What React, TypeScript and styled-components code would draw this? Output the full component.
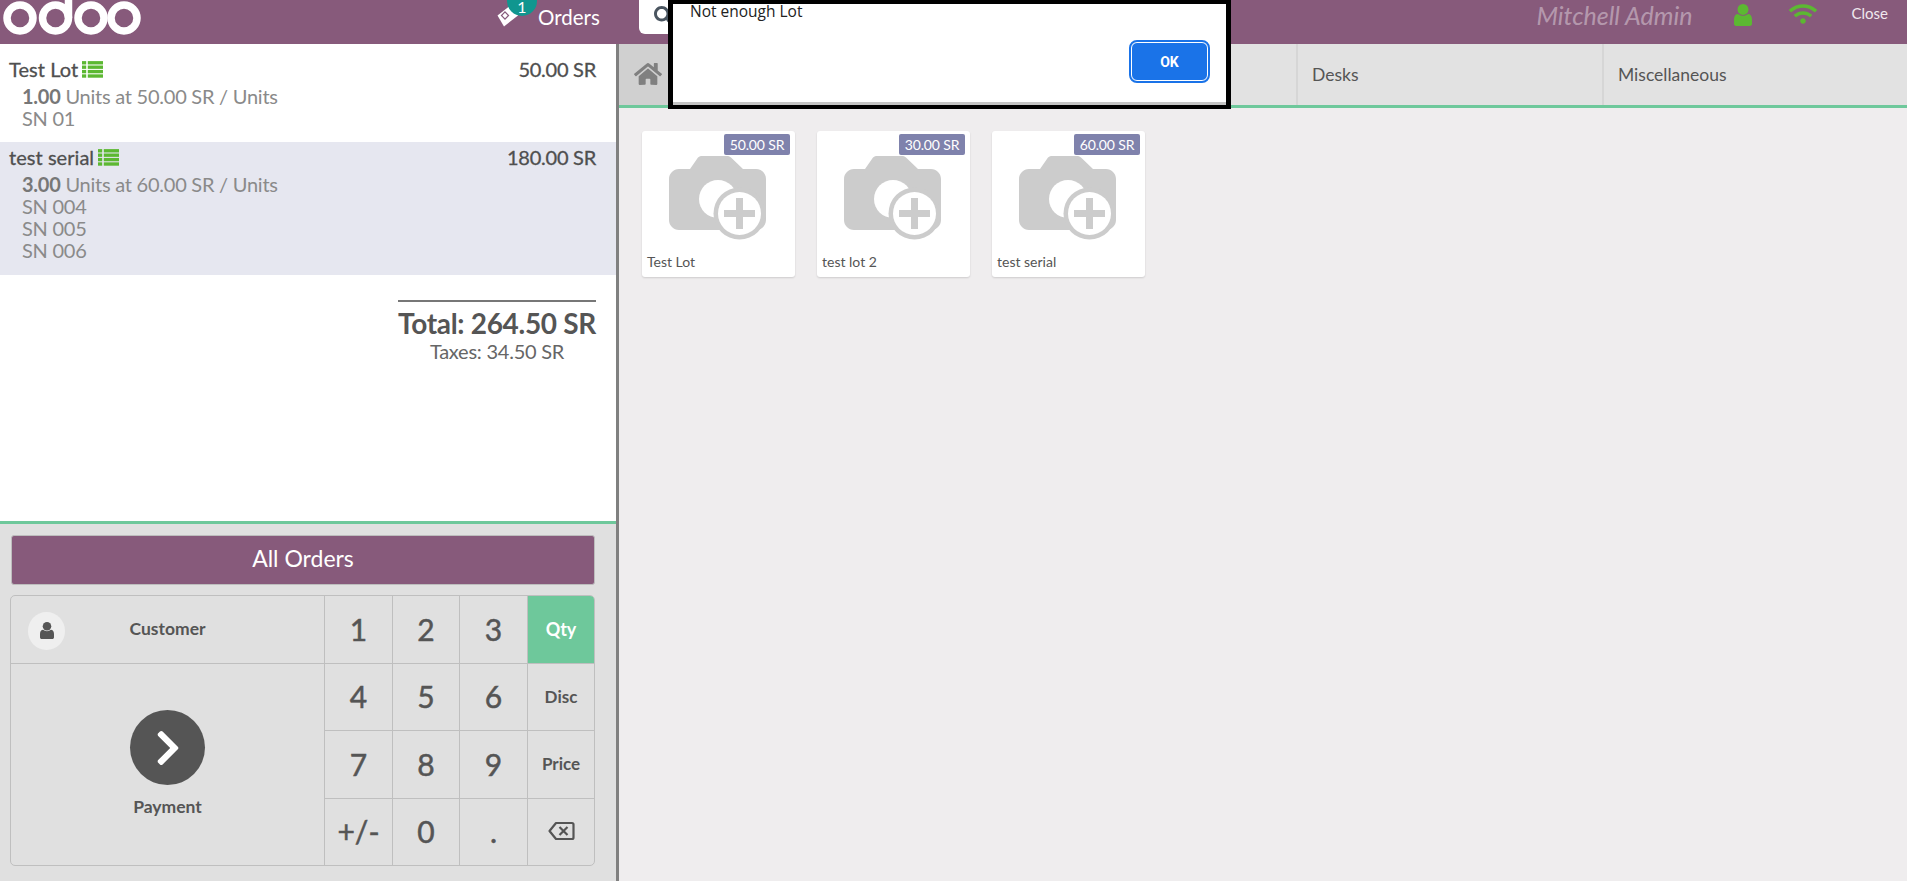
import React from 'react';
import styled, { createGlobalStyle } from 'styled-components';
import { FaHome, FaSearch, FaWifi, FaChevronRight } from 'react-icons/fa';

const GlobalStyle = createGlobalStyle`
  html, body {
    margin: 0;
    padding: 0;
    height: 100%;
    overflow: hidden;
    font-family: 'Lato', 'Noto Sans', sans-serif;
    color: #555555;
  }
  * { box-sizing: border-box; }
`;

const Page = styled.div`
  position: relative;
  width: 1907px;
  height: 881px;
  display: flex;
  flex-direction: column;
  overflow: hidden;
`;

const Header = styled.header`
  height: 44px;
  flex: none;
  background: #875a7b;
  display: flex;
  align-items: flex-start;
`;

const Logo = styled.svg`
  width: 142px;
  height: 36px;
  margin-left: 2px;
  flex: none;
`;

const OrdersTab = styled.div`
  position: relative;
  margin-left: 353px;
  width: 142px;
  height: 34px;
  display: flex;
  align-items: center;
  color: #fff;
  font-size: 20.500px;
  flex: none;
`;

const Ticket = styled.svg`
  width: 22px;
  height: 20px;
  margin-top: 3px;
  flex: none;
  overflow: visible;
`;

const OrdersLabel = styled.span`
  margin-left: 19px;
  line-height: 28px;
`;

const Badge = styled.span`
  position: absolute;
  left: 10px;
  top: 0;
  width: 30px;
  height: 16px;
  border-radius: 0 0 15px 15px;
  background: #10968f;
  color: #fff;
  font-size: 16px;
  line-height: 14px;
  text-align: center;
`;

const SearchBox = styled.div`
  width: 300px;
  height: 34px;
  background: #fff;
  border-radius: 0 0 0 6px;
  padding: 6px 0 0 15px;
  color: #4a5560;
  font-size: 19px;
  flex: none;
`;

const HeaderRight = styled.div`
  margin-left: auto;
  display: flex;
  align-items: flex-start;
`;

const Cashier = styled.span`
  color: rgba(255, 255, 255, 0.4);
  font-style: italic;
  font-size: 25px;
  line-height: 30px;
`;

const UserIcon = styled.svg<{ $size: number }>`
  width: ${props => props.$size}px;
  height: ${props => props.$size * 1.22}px;
  flex: none;
`;

const HeaderUser = styled.div`
  margin: 4px 0 0 41px;
  line-height: 0;
  color: #5cb832;
`;

const WifiBox = styled.div`
  margin: 0 0 0 37px;
  color: #5cb832;
  font-size: 28px;
  line-height: 0;
`;

const CloseLabel = styled.span`
  margin: 4px 19px 0 35px;
  color: #f0e8ee;
  font-size: 15px;
  line-height: 18px;
`;

const Body = styled.div`
  flex: 1;
  display: flex;
  min-height: 0;
`;

const LeftPane = styled.div`
  width: 619px;
  flex: none;
  border-right: 3px solid #808080;
  display: flex;
  flex-direction: column;
`;

const OrderArea = styled.div`
  flex: 1;
  background: #fff;
  border-bottom: 3px solid #6ec89b;
`;

const Line = styled.div<{ $selected?: boolean }>`
  background: ${props => (props.$selected ? '#e6e7f0' : '#fff')};
  padding: ${props => (props.$selected ? '4px' : '14px')} 20px 0 9px;
  height: ${props => (props.$selected ? '133px' : '98px')};
`;

const LineTop = styled.div`
  display: flex;
  justify-content: space-between;
  align-items: center;
  height: 22px;
  font-size: 20px;
  letter-spacing: -0.250px;
  -webkit-text-stroke: 0.300px #4f4f4f;
  color: #4f4f4f;
`;

const LineName = styled.span`
  display: flex;
  align-items: center;
  gap: 4px;
  letter-spacing: 0.050px;
`;

const LotIcon = styled.svg`
  width: 21px;
  height: 17px;
  fill: #5cb832;
  stroke: none;
  flex: none;
`;

const LineInfo = styled.div`
  margin: 5px 0 0 13px;
  font-size: 20px;
  letter-spacing: -0.250px;
  line-height: 22px;
  color: #8a8a8a;
`;

const LineQty = styled.strong`
  color: #777;
  font-weight: 700;
`;

const Summary = styled.div`
  width: 198px;
  margin: 25px 20px 0 auto;
  border-top: 2px solid #777;
  text-align: center;
`;

const Total = styled.div`
  font-size: 28px;
  font-weight: 700;
  letter-spacing: -0.300px;
  line-height: 30px;
  margin-top: 6px;
  color: #555;
  white-space: nowrap;
`;

const Taxes = styled.div`
  font-size: 20px;
  letter-spacing: -0.250px;
  line-height: 22px;
  margin-top: 2px;
  color: #666;
`;

const Controls = styled.div`
  height: 357px;
  flex: none;
  background: #e0e0e0;
  padding: 11px 21px 0 11px;
`;

const AllOrders = styled.div`
  height: 50px;
  background: #875a7b;
  border: 1px solid #bdbdbd;
  border-radius: 3px;
  color: #fff;
  font-size: 23px;
  padding-bottom: 4px;
  display: flex;
  align-items: center;
  justify-content: center;
`;

const Pad = styled.div`
  margin-top: 10px;
  height: 271px;
  width: 585px;
  margin-left: -1px;
  border: 1px solid #bfbfbf;
  border-radius: 5px;
  overflow: hidden;
  display: grid;
  grid-template-columns: 314px 68px 67px 68px 1fr;
  grid-template-rows: 68px 67px 68px 1fr;
`;

const Cell = styled.div<{ $last?: boolean; $bottom?: boolean }>`
  display: flex;
  align-items: center;
  justify-content: center;
  padding-bottom: 2px;
  border-right: ${props => (props.$last ? 'none' : '1px solid #bfbfbf')};
  border-bottom: ${props => (props.$bottom ? 'none' : '1px solid #bfbfbf')};
`;

const CustomerCell = styled(Cell)`
  position: relative;
  font-size: 17.500px;
  font-weight: 700;
  color: #555;
`;

const Avatar = styled.span`
  position: absolute;
  left: 17px;
  top: 16px;
  width: 37px;
  height: 38px;
  border-radius: 50%;
  background: #efefef;
  display: flex;
  align-items: center;
  justify-content: center;
  color: #555;
`;

const PaymentCell = styled(Cell)`
  grid-row: 2 / 5;
  grid-column: 1;
  flex-direction: column;
  gap: 11px;
  font-size: 17.500px;
  font-weight: 700;
  color: #555;
`;

const PayCircle = styled.span`
  width: 75px;
  height: 75px;
  border-radius: 50%;
  background: #555;
  color: #fff;
  font-size: 40px;
  display: flex;
  align-items: center;
  justify-content: center;
`;

const NumKey = styled(Cell)`
  font-size: 30px;
  -webkit-text-stroke: 0.500px #555;
  color: #555;
`;

const ModeKey = styled(Cell)<{ $active?: boolean }>`
  font-size: ${props => (props.$active ? '18px' : '17px')};
  font-weight: 700;
  background: ${props => (props.$active ? '#6ec89b' : 'transparent')};
  color: ${props => (props.$active ? '#fff' : '#555')};
`;

const RightPane = styled.div`
  flex: 1;
  background: #efedee;
  min-width: 0;
`;

const CategoryBar = styled.nav`
  height: 64px;
  display: flex;
  background: #e2e2e2;
  border-bottom: 3px solid #6ec89b;
`;

const HomeTab = styled.div`
  width: 371px;
  flex: none;
  background: #d0d0d0;
  padding: 16px 0 0 15px;
  color: #808080;
  font-size: 28px;
  line-height: 0;
`;

const CategoryTab = styled.div`
  width: 306px;
  flex: none;
  border-left: 2px solid #d6d6d6;
  padding-left: 14px;
  display: flex;
  align-items: center;
  font-size: 17.500px;
  color: #555;
`;

const ProductList = styled.div`
  display: flex;
  gap: 22px;
  padding: 23px 0 0 23px;
`;

const Product = styled.div`
  position: relative;
  width: 153px;
  height: 146px;
  background: #fff;
  border-radius: 3px;
  box-shadow: 0 1px 2px rgba(0, 0, 0, 0.14);
  padding: 25px 0 0 27px;
`;

const PriceTag = styled.span`
  position: absolute;
  top: 3px;
  right: 5px;
  height: 21px;
  width: 66px;
  border-radius: 2px;
  background: #7f82ac;
  color: #fff;
  font-size: 14px;
  letter-spacing: -0.150px;
  display: flex;
  align-items: center;
  justify-content: center;
`;

const ProductName = styled.div`
  margin: 8px 0 0 -22px;
  font-size: 14px;
  line-height: 20px;
  color: #555;
`;

const Dialog = styled.div`
  position: absolute;
  left: 668px;
  top: 0;
  width: 563px;
  height: 109px;
  background: #fff;
  border: solid #000;
  border-width: 4px 5px;
`;

const DialogText = styled.div`
  font-family: 'Open Sans', 'Noto Sans', sans-serif;
  font-size: 15.500px;
  line-height: 14px;
  color: #222;
  padding-left: 17px;
`;

const DialogActions = styled.div`
  display: flex;
  justify-content: flex-end;
  padding: 24px 18px 0 0;
`;

const OkButton = styled.button`
  width: 77px;
  height: 39px;
  background: #1a73e8;
  border: 1px solid #fff;
  outline: 2px solid #1a73e8;
  outline-offset: 0;
  border-radius: 6px;
  color: #fff;
  font-family: 'Roboto', 'Liberation Sans', sans-serif;
  font-size: 14px;
  font-weight: 700;
  margin: 0;
`;

const DialogEdge = styled.div`
  position: absolute;
  left: 0;
  right: 0;
  bottom: 0;
  height: 3px;
  background: #c4c4c4;
`;

const lines = [
  { name: 'Test Lot', price: '50.00 SR', qty: '1.00', unit: '50.00 SR', lots: ['SN 01'] },
  { name: 'test serial', price: '180.00 SR', qty: '3.00', unit: '60.00 SR', lots: ['SN 004', 'SN 005', 'SN 006'], selected: true },
];

const products = [
  { name: 'Test Lot', price: '50.00 SR' },
  { name: 'test lot 2', price: '30.00 SR' },
  { name: 'test serial', price: '60.00 SR' },
];

const keys = [
  ['1', '2', '3', 'Qty'],
  ['4', '5', '6', 'Disc'],
  ['7', '8', '9', 'Price'],
  ['+/-', '0', '.', 'back'],
];

const UserGlyph = ({ size, color }: { size: number; color: string }) => (
  <UserIcon $size={size} viewBox="0 0 18 22">
    <circle cx="9" cy="5.5" r="5.5" fill={color} />
    <path d="M0 20v-5c0-3 2-5 4-5 1.500 1.200 3 1.800 5 1.800s3.500-.6 5-1.800c2 0 4 2 4 5v5c0 1-1 2-2 2H2c-1 0-2-1-2-2z" fill={color} />
  </UserIcon>
);

const LotGlyph = () => (
  <LotIcon viewBox="0 0 20 16">
    {[0, 4.2, 8.4, 12.6].map(y => (
      <React.Fragment key={y}>
        <rect x="0" y={y} width="4" height="3.2" />
        <rect x="5.500" y={y} width="14.500" height="3.2" />
      </React.Fragment>
    ))}
  </LotIcon>
);

const CameraIcon = () => (
  <svg width="97" height="85" viewBox="0 0 97 85">
    <path d="M32 0h27c1 0 2 .5 3 1.500L74 13h13c5.500 0 10 4.500 10 10v41c0 5.500-4.500 10-10 10H10C4.500 74 0 69.500 0 64V23c0-5.500 4.500-10 10-10h11L29 1.500C30 .5 31 0 32 0z" fill="#cccccc" />
    <circle cx="49" cy="43" r="19" fill="#fff" />
    <circle cx="70.500" cy="57.500" r="26" fill="#cccccc" />
    <circle cx="70.500" cy="57.500" r="21.500" fill="#fff" />
    <rect x="55" y="54" width="31" height="7" fill="#cccccc" />
    <rect x="67" y="42" width="7" height="31" fill="#cccccc" />
  </svg>
);

const BackspaceIcon = () => (
  <svg width="27" height="20" viewBox="0 0 27 20" fill="none" stroke="#555" strokeWidth="2.200">
    <path d="M8 2h16a1.500 1.500 0 0 1 1.500 1.500v13A1.500 1.500 0 0 1 24 18H8L1.500 10z" strokeLinejoin="round" />
    <path d="M11.500 6l8 8M19.500 6l-8 8" />
  </svg>
);

export default function App() {
  return (
    <Page>
      <GlobalStyle />
      <Header>
        <Logo viewBox="0 0 142 36" fill="none" stroke="#fff" strokeWidth="7.500">
          <circle cx="18" cy="18" r="13" />
          <circle cx="53.500" cy="18" r="13" />
          <path d="M66.500 18V-2" />
          <circle cx="89" cy="18" r="13" />
          <circle cx="122" cy="18" r="13" />
        </Logo>
        <OrdersTab>
          <Ticket viewBox="0 0 22 20">
            <polygon points="0.500,6.500 7,17.500 21,6.500 14,-4" fill="#fff" />
            <rect x="5.500" y="4" width="5" height="5" transform="rotate(45 8 6.500)" fill="none" stroke="#875a7b" strokeWidth="1.200" />
          </Ticket>
          <Badge>1</Badge>
          <OrdersLabel>Orders</OrdersLabel>
        </OrdersTab>
        <SearchBox>
          <FaSearch />
        </SearchBox>
        <HeaderRight>
          <Cashier>Mitchell Admin</Cashier>
          <HeaderUser>
            <UserGlyph size={18} color="#5cb832" />
          </HeaderUser>
          <WifiBox>
            <FaWifi />
          </WifiBox>
          <CloseLabel>Close</CloseLabel>
        </HeaderRight>
      </Header>
      <Body>
        <LeftPane>
          <OrderArea>
            {lines.map(line => (
              <Line key={line.name} $selected={line.selected}>
                <LineTop>
                  <LineName>
                    {line.name}
                    <LotGlyph />
                  </LineName>
                  <span>{line.price}</span>
                </LineTop>
                <LineInfo>
                  <LineQty>{line.qty}</LineQty> Units at {line.unit} / Units
                  {line.lots.map(lot => (
                    <div key={lot}>{lot}</div>
                  ))}
                </LineInfo>
              </Line>
            ))}
            <Summary>
              <Total>Total: 264.50 SR</Total>
              <Taxes>Taxes: 34.50 SR</Taxes>
            </Summary>
          </OrderArea>
          <Controls>
            <AllOrders>All Orders</AllOrders>
            <Pad>
              <CustomerCell>
                <Avatar>
                  <UserGlyph size={14} color="#555" />
                </Avatar>
                Customer
              </CustomerCell>
              {keys[0].slice(0, 3).map(k => (
                <NumKey key={k}>{k}</NumKey>
              ))}
              <ModeKey $active $last>Qty</ModeKey>
              <PaymentCell $bottom>
                <PayCircle>
                  <FaChevronRight />
                </PayCircle>
                Payment
              </PaymentCell>
              {keys.slice(1).map((row, i) =>
                row.map((k, j) =>
                  j < 3 ? (
                    <NumKey key={k} $bottom={i === 2}>{k}</NumKey>
                  ) : (
                    <ModeKey key={k} $last $bottom={i === 2}>
                      {k === 'back' ? <BackspaceIcon /> : k}
                    </ModeKey>
                  ),
                ),
              )}
            </Pad>
          </Controls>
        </LeftPane>
        <RightPane>
          <CategoryBar>
            <HomeTab>
              <FaHome />
            </HomeTab>
            <CategoryTab />
            <CategoryTab>Desks</CategoryTab>
            <CategoryTab>Miscellaneous</CategoryTab>
          </CategoryBar>
          <ProductList>
            {products.map(p => (
              <Product key={p.name}>
                <PriceTag>{p.price}</PriceTag>
                <CameraIcon />
                <ProductName>{p.name}</ProductName>
              </Product>
            ))}
          </ProductList>
        </RightPane>
      </Body>
      <Dialog>
        <DialogText>Not enough Lot</DialogText>
        <DialogActions>
          <OkButton>OK</OkButton>
        </DialogActions>
        <DialogEdge />
      </Dialog>
    </Page>
  );
}
